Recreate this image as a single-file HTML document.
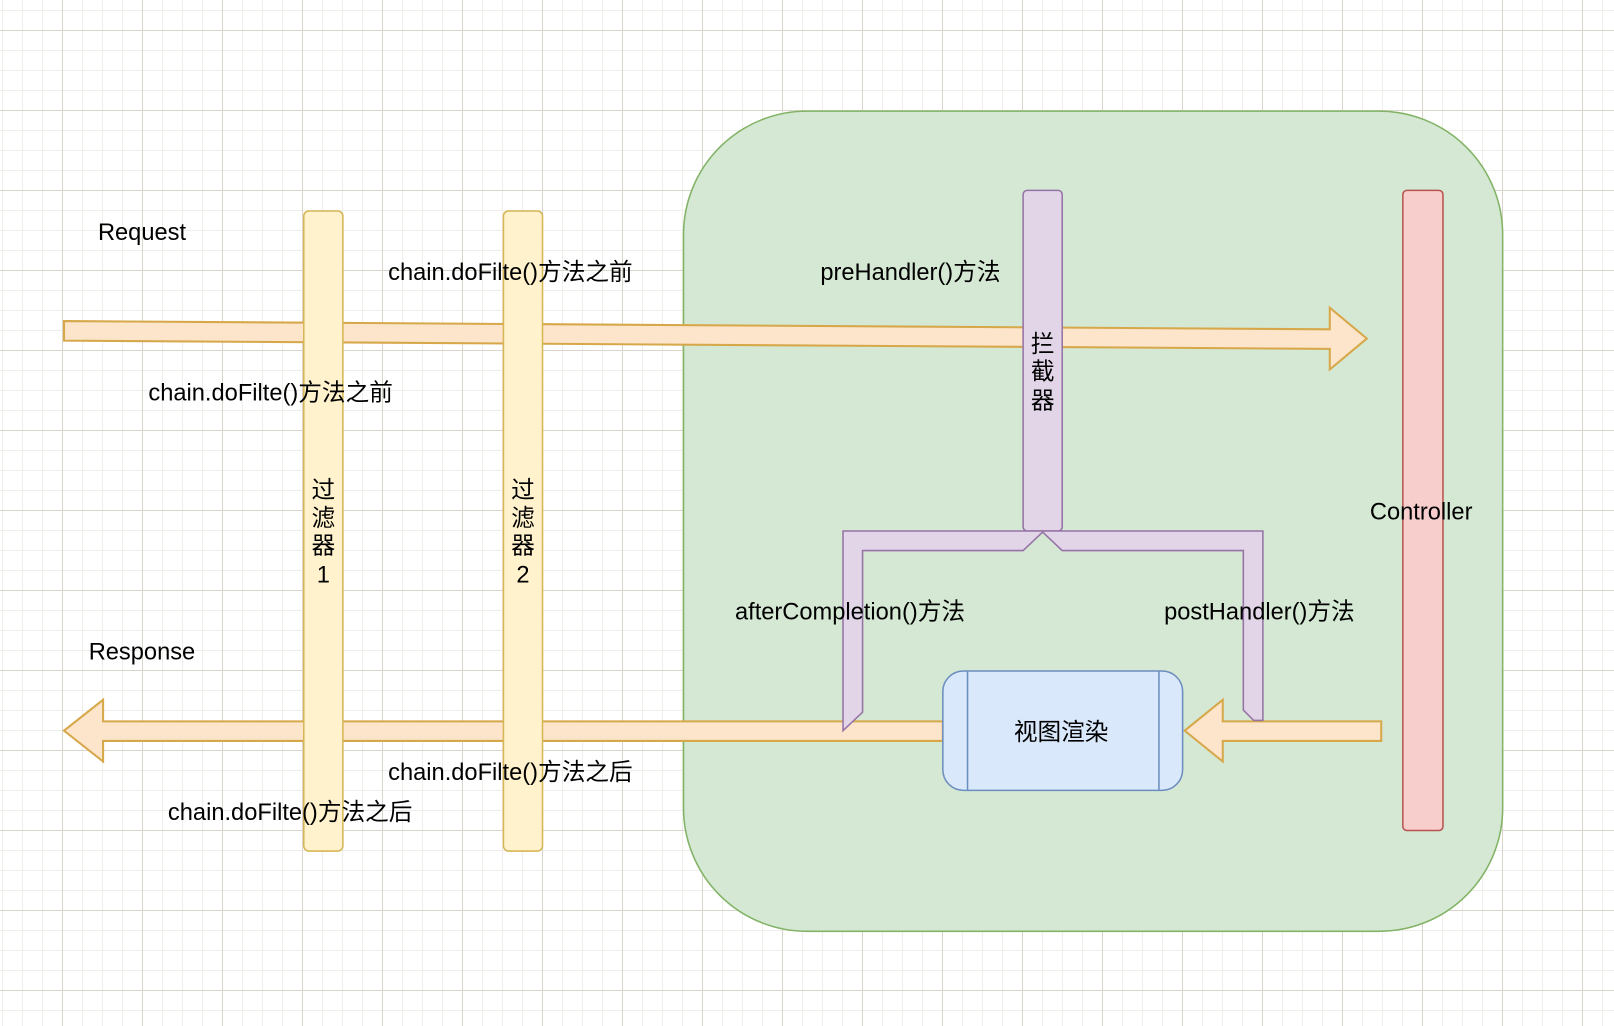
<!DOCTYPE html>
<html><head><meta charset="utf-8"><style>
html,body{margin:0;padding:0}
body{width:1614px;height:1026px;overflow:hidden;background-color:#fff;
background-image:
linear-gradient(to right,#d9d5cc 1px,transparent 1px),
linear-gradient(to bottom,#d9d5cc 1px,transparent 1px),
linear-gradient(to right,#f0eee9 1px,transparent 1px),
linear-gradient(to bottom,#f0eee9 1px,transparent 1px);
background-size:80px 80px,80px 80px,20px 20px,20px 20px;
background-position:62px 0,0 30px,2px 0,0 10px;}
svg{position:absolute;left:0;top:0}
text{font-family:"Liberation Sans","Noto Sans CJK SC",sans-serif;font-size:23px;fill:#000}
</style></head><body>
<svg width="1614" height="1026" viewBox="0 0 1568 997">
<rect x="664" y="108" width="796" height="797" rx="120" fill="#d5e8d4" stroke="#82b366" stroke-width="1.5"/>
<polygon points="62,312 1292,320 1292,299 1328,329 1292,359 1292,339 62,331" fill="#fde5cc" stroke="#d6a84a" stroke-width="2"/>
<polygon points="916,701 100,701 100,680 62,710 100,740 100,720 916,720" fill="#fde5cc" stroke="#d6a84a" stroke-width="2"/>
<polygon points="1342,701 1188,701 1188,680 1151,710 1188,740 1188,720 1342,720" fill="#fde5cc" stroke="#d6a84a" stroke-width="2"/>
<rect x="295" y="205" width="38" height="622" rx="5" fill="#fff2cc" stroke="#d6b656" stroke-width="1.5"/>
<rect x="489" y="205" width="38" height="622" rx="5" fill="#fff2cc" stroke="#d6b656" stroke-width="1.5"/>
<rect x="994" y="185" width="38" height="331" rx="4" fill="#e1d5e7" stroke="#9673a6" stroke-width="1.5"/>
<polygon points="819,516 1227,516 1227,700 1218,700 1208,690 1208,535 1032,535 1013,517 994,535 838,535 838,692 819,710" fill="#e1d5e7" stroke="#9673a6" stroke-width="1.5"/>
<rect x="916" y="652" width="233" height="116" rx="20" fill="#dae8fc" stroke="#6c8ebf" stroke-width="1.5"/>
<line x1="940" y1="652" x2="940" y2="768" stroke="#6c8ebf" stroke-width="1.5"/>
<line x1="1126" y1="652" x2="1126" y2="768" stroke="#6c8ebf" stroke-width="1.5"/>
<rect x="1363" y="185" width="39" height="622" rx="4" fill="#f8cecc" stroke="#b85450" stroke-width="1.5"/>
<g>
<text x="95" y="233">Request</text>
<text x="86" y="641">Response</text>
<text x="377" y="272">chain.doFilte()方法之前</text>
<text x="144" y="389">chain.doFilte()方法之前</text>
<text x="377" y="758">chain.doFilte()方法之后</text>
<text x="163" y="797">chain.doFilte()方法之后</text>
<text x="797" y="272">preHandler()方法</text>
<text x="714" y="602">afterCompletion()方法</text>
<text x="1131" y="602">postHandler()方法</text>
<text x="1331" y="505">Controller</text>
<text x="985" y="719">视图渲染</text>
<text x="314" y="484" text-anchor="middle">过</text>
<text x="314" y="511" text-anchor="middle">滤</text>
<text x="314" y="538" text-anchor="middle">器</text>
<text x="314" y="566" text-anchor="middle">1</text>
<text x="508" y="484" text-anchor="middle">过</text>
<text x="508" y="511" text-anchor="middle">滤</text>
<text x="508" y="538" text-anchor="middle">器</text>
<text x="508" y="566" text-anchor="middle">2</text>
<text x="1013" y="342" text-anchor="middle">拦</text>
<text x="1013" y="369" text-anchor="middle">截</text>
<text x="1013" y="397" text-anchor="middle">器</text>
</g>
</svg>
</body></html>
